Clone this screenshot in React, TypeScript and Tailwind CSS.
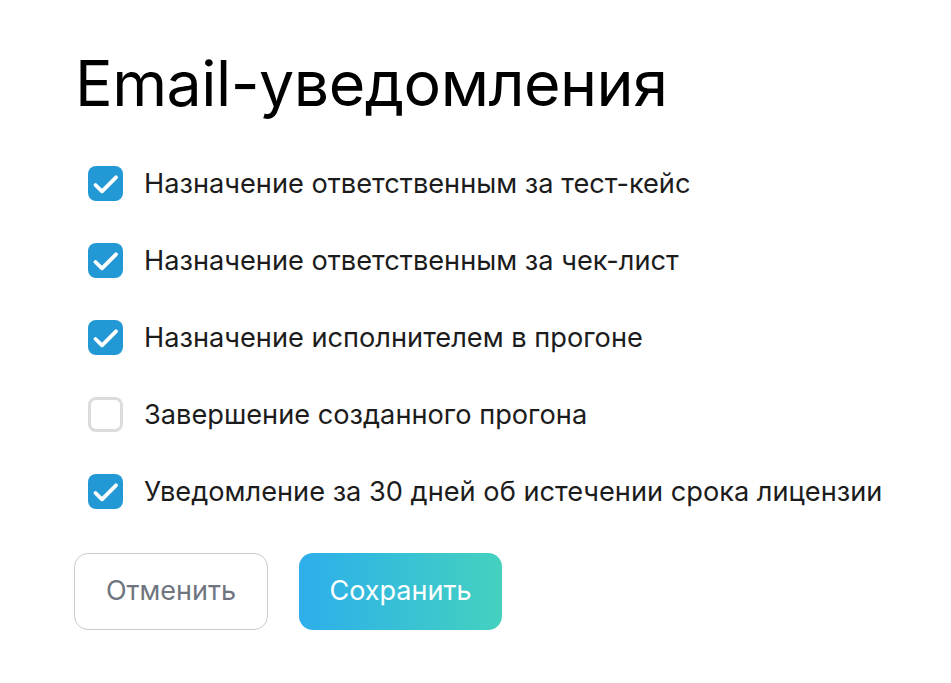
import React, { useState } from "react";

const items = [
  { label: "Назначение ответственным за тест-кейс", checked: true },
  { label: "Назначение ответственным за чек-лист", checked: true },
  { label: "Назначение исполнителем в прогоне", checked: true },
  { label: "Завершение созданного прогона", checked: false },
  { label: "Уведомление за 30 дней об истечении срока лицензии", checked: true },
];

function Check({ checked }: { checked: boolean }) {
  if (checked) {
    return (
      <span className="flex h-[35px] w-[35px] shrink-0 items-center justify-center rounded-[8px] bg-[#2299d4]">
        <svg width="35" height="35" viewBox="0 0 35 35" fill="none">
          <path d="M7.5 19L14 25.3L28 11.3" stroke="white" strokeWidth="3.8" strokeLinecap="round" strokeLinejoin="round" />
        </svg>
      </span>
    );
  }
  return <span className="block h-[35px] w-[35px] shrink-0 rounded-[8px] border-[3px] border-[#dcdcdc] bg-white" />;
}

export default function App() {
  const [state, setState] = useState(items.map((i) => i.checked));
  return (
    <div className="min-h-[683px] w-full bg-white pl-[74px] pt-[43px]" style={{ fontFamily: "Inter, 'Noto Sans', sans-serif" }}>
      <h1 className="pl-[1px] text-[62.7px] font-normal leading-[80px] tracking-[-0.5px] text-black">Email-уведомления</h1>
      <div className="mt-[43px] flex flex-col gap-[42px] pl-[14px]">
        {items.map((it, i) => (
          <label key={i} className="flex h-[35px] cursor-pointer items-center gap-[21px]" onClick={() => setState((s) => s.map((v, j) => (j === i ? !v : v)))}>
            <Check checked={state[i]} />
            <span className="text-[27.2px] leading-[35px] text-[#1c1c1c]">{it.label}</span>
          </label>
        ))}
      </div>
      <div className="mt-[44px] flex gap-[31px]">
        <button className="h-[77px] w-[194px] rounded-[14px] border border-[#c9cbd1] bg-white text-[27px] text-[#6f7580]">Отменить</button>
        <button className="h-[77px] w-[203px] rounded-[14px] bg-gradient-to-r from-[#2eaeeb] to-[#45d1be] text-[27px] text-white">Сохранить</button>
      </div>
    </div>
  );
}
